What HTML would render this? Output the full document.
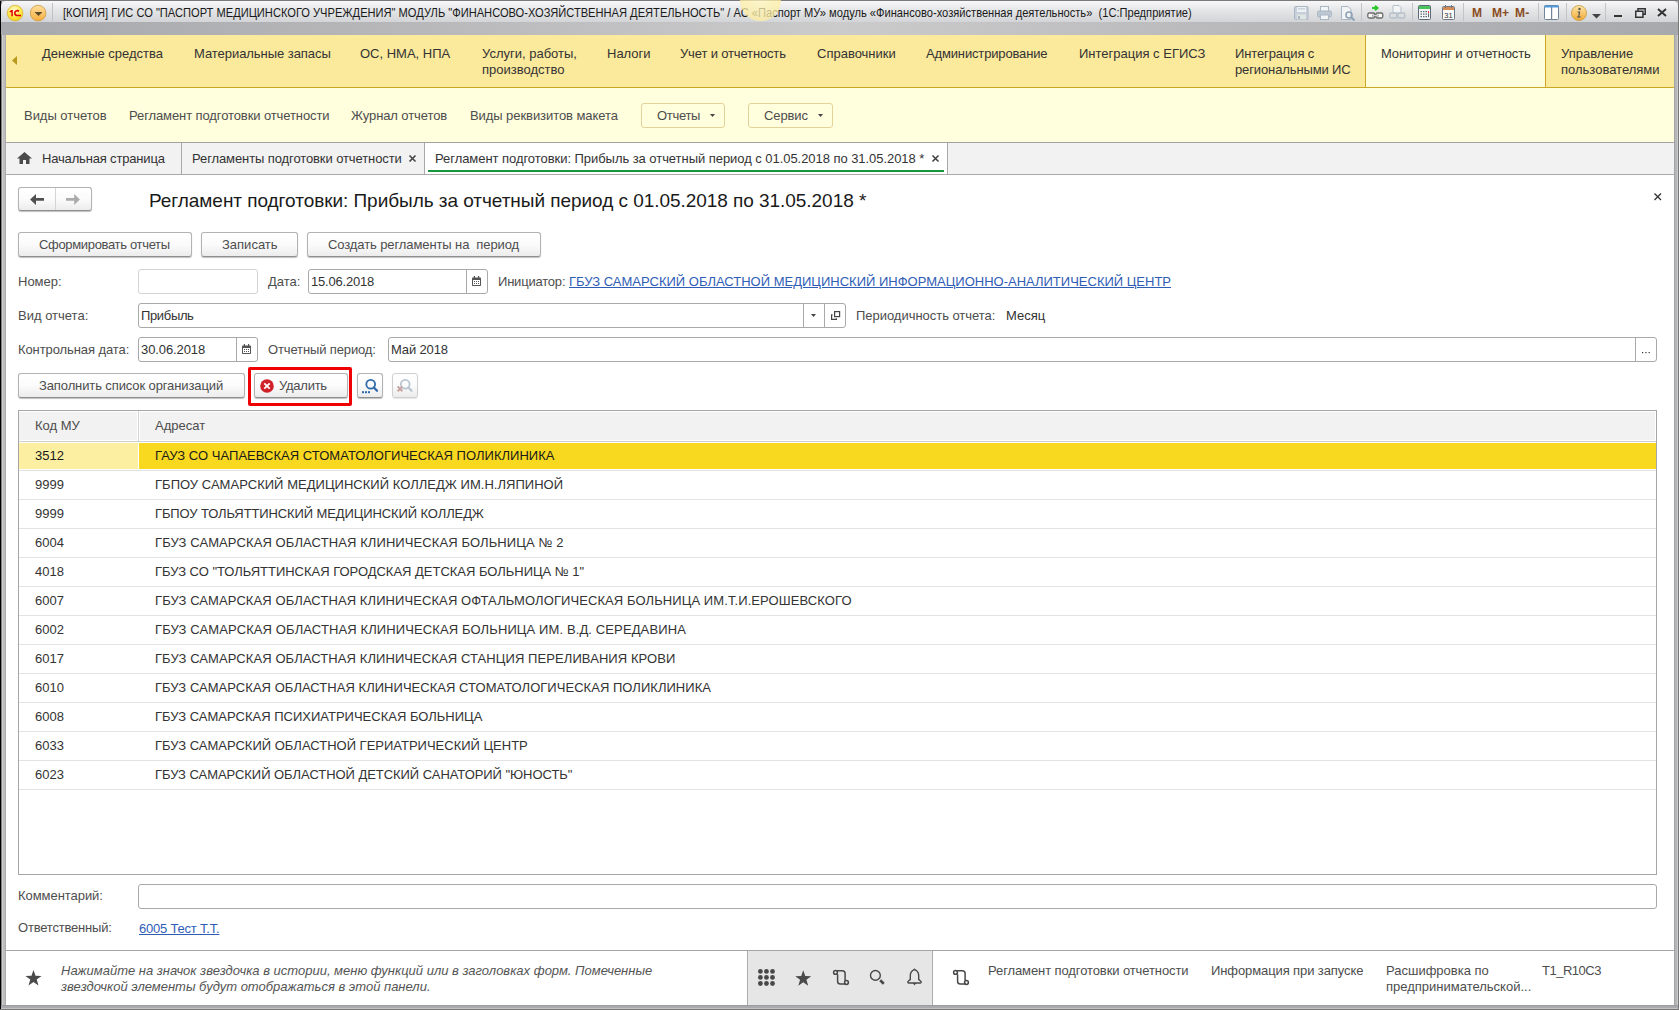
<!DOCTYPE html>
<html><head><meta charset="utf-8">
<style>
*{box-sizing:border-box;margin:0;padding:0}
html,body{width:1679px;height:1010px;overflow:hidden;background:#fff}
body{position:relative;font-family:"Liberation Sans",sans-serif;font-size:13px;color:#4d4d4d}
.a{position:absolute}
.t{position:absolute;white-space:nowrap;font-size:13px;line-height:16px}
svg{position:absolute;overflow:visible}
.btn{position:absolute;border:1px solid #b3b3b3;border-bottom-color:#8f8f8f;border-radius:3px;background:linear-gradient(#ffffff 0%,#fbfbfb 50%,#ececec 100%);box-shadow:0 1px 1px rgba(0,0,0,0.25)}
.fld{position:absolute;border:1px solid #a9a9a9;border-radius:3px;background:#fff}
.vl{position:absolute;width:1px;background:#a9a9a9}

</style></head><body>
<!-- window frame -->
<div class="a" style="left:0;top:0;width:1679px;height:1010px;background:#b5b6b8"></div>
<div class="a" style="left:0;top:0;width:1px;height:1010px;background:#000"></div>
<div class="a" style="left:1px;top:0;width:1px;height:1010px;background:#7f7f7f"></div>
<div class="a" style="left:2px;top:0;width:1px;height:1010px;background:#d0d0d0"></div>
<div class="a" style="left:3px;top:0;width:2px;height:1010px;background:#bdbdbd"></div>
<div class="a" style="left:5px;top:0;width:1px;height:1010px;background:#adadad"></div>
<div class="a" style="left:1674px;top:0;width:1px;height:1010px;background:#a3a4a6"></div>
<div class="a" style="left:1677px;top:0;width:1px;height:1010px;background:#cacaca"></div>
<div class="a" style="left:1678px;top:0;width:1px;height:1010px;background:#787878"></div>
<div class="a" style="left:0;top:0;width:1679px;height:1px;background:#7a7a7a"></div>
<!-- title bar -->
<div class="a" style="left:1px;top:1px;width:1677px;height:21px;background:linear-gradient(#f8f8f9,#e6e7e9 40%,#d3d4d7);border-radius:5px 5px 0 0"></div>
<div class="a" style="left:1px;top:22px;width:1677px;height:13px;background:linear-gradient(to right,#a8a9ad 0%,#b8b8ba 25%,#cbcbcc 50%,#b8b8ba 75%,#a8a9ad 100%)"></div>


<!-- title bar content -->
<svg style="left:7px;top:5px" width="17" height="17" viewBox="0 0 17 17">
 <defs><radialGradient id="gy" cx="0.45" cy="0.3" r="0.7"><stop offset="0" stop-color="#fffbd0"/><stop offset="0.6" stop-color="#ffe84a"/><stop offset="1" stop-color="#f5cf10"/></radialGradient></defs>
 <circle cx="8.1" cy="8.1" r="7.8" fill="url(#gy)" stroke="#d8b43a" stroke-width="0.8"/>
 <path d="M2.4 6.4 L4.4 4.9 H5.8 V11.3 H4.3 V6.8 L3 7.6 Z" fill="#e00000"/><path d="M11.9 6.3 A2.45 2.45 0 1 0 9.7 10.5 H14" fill="none" stroke="#e00000" stroke-width="1.6"/></svg>
<svg style="left:30px;top:5px" width="17" height="17" viewBox="0 0 17 17">
 <defs><linearGradient id="go" x1="0" y1="0" x2="0" y2="1"><stop offset="0" stop-color="#ffe0a0"/><stop offset="1" stop-color="#f6ad3c"/></linearGradient></defs>
 <circle cx="8.1" cy="8.1" r="7.8" fill="url(#go)" stroke="#c99a3c" stroke-width="0.8"/>
 <path d="M4.5 7 H12.5 L8.5 11 Z" fill="#5a4a2a"/>
</svg>
<div class="a" style="left:52px;top:3px;width:1px;height:20px;background:#c2c2c4"></div>
<div class="t" style="left:63px;top:5px;color:#1a1a1a;transform:scaleX(0.855);transform-origin:0 0">[КОПИЯ] ГИС СО "ПАСПОРТ МЕДИЦИНСКОГО УЧРЕЖДЕНИЯ" МОДУЛЬ "ФИНАНСОВО-ХОЗЯЙСТВЕННАЯ ДЕЯТЕЛЬНОСТЬ" / АС «Паспорт МУ» модуль «Финансово-хозяйственная деятельность»&nbsp; (1С:Предприятие)</div>
<div class="a" style="left:740px;top:-20px;width:41px;height:41px;border-radius:50%;background:radial-gradient(circle,rgba(255,246,190,0.75) 0%,rgba(255,238,160,0.75) 70%,rgba(240,205,100,0.7) 92%,rgba(240,205,100,0) 100%)"></div>
<!-- toolbar icons -->
<svg style="left:1294px;top:6px" width="15" height="14" viewBox="0 0 15 14"><rect x="0.5" y="0.5" width="13.5" height="13" rx="1" fill="#c7d0da" stroke="#a9b6c3"/><rect x="3" y="1" width="9" height="5" fill="#eef1f4"/><rect x="4" y="2.5" width="7" height="0.8" fill="#a9b6c3"/><rect x="3" y="8.5" width="9" height="5" fill="#dfe6e2"/><rect x="4" y="10" width="2" height="3" fill="#a9b6c3"/></svg>
<svg style="left:1317px;top:6px" width="15" height="14" viewBox="0 0 15 14"><rect x="3.5" y="0.5" width="8" height="5" fill="#f2f4f6" stroke="#a9b6c3"/><rect x="0.5" y="5" width="14" height="6" rx="1.5" fill="#bcc7d2" stroke="#a9b6c3"/><rect x="3.5" y="9" width="8" height="4.5" fill="#f2f4f6" stroke="#a9b6c3"/></svg>
<svg style="left:1341px;top:6px" width="15" height="15" viewBox="0 0 15 15"><path d="M0.5 0.5 H7 L10 3.5 V13.5 H0.5 Z" fill="#f2f4f6" stroke="#a9b6c3"/><circle cx="8" cy="9" r="3" fill="none" stroke="#8fa2b4" stroke-width="1.6"/><path d="M10 11 L13.5 14.5" stroke="#8fa2b4" stroke-width="2"/></svg>
<div class="a" style="left:1361px;top:3px;width:1px;height:18px;background:#c4c4c6"></div>
<svg style="left:1367px;top:5px" width="17" height="15" viewBox="0 0 17 15"><path d="M5 3 H10 M8 0.8 L10.5 3 L8 5.2" stroke="#2bc82b" stroke-width="2" fill="none"/><rect x="0.8" y="8" width="7" height="5" rx="1.5" fill="#fafafa" stroke="#6b6b6b" stroke-width="1.3"/><rect x="8.8" y="8" width="7" height="5" rx="1.5" fill="#fafafa" stroke="#6b6b6b" stroke-width="1.3"/><rect x="5.5" y="10" width="6" height="1.2" fill="#fff" stroke="#6b6b6b" stroke-width="0.5"/></svg>
<svg style="left:1389px;top:5px" width="17" height="15" viewBox="0 0 17 15"><path d="M4 0.5 H10 L12 2.5 V8 H4 Z" fill="#f2f4f6" stroke="#b7c1cb"/><rect x="0.8" y="8" width="7" height="5" rx="1.5" fill="none" stroke="#b7c1cb" stroke-width="1.4"/><rect x="8.8" y="8" width="7" height="5" rx="1.5" fill="none" stroke="#b7c1cb" stroke-width="1.4"/></svg>
<div class="a" style="left:1412px;top:3px;width:1px;height:18px;background:#c4c4c6"></div>
<svg style="left:1418px;top:5px" width="13" height="15" viewBox="0 0 13 15"><rect x="0.5" y="0.5" width="12" height="14" rx="1" fill="#f4f6f8" stroke="#5c6a78"/><rect x="1" y="1" width="11" height="3" fill="#4cc35a"/><g fill="#5c6a78"><rect x="2.5" y="6" width="1.5" height="1.2"/><rect x="5" y="6" width="1.5" height="1.2"/><rect x="7.5" y="6" width="1.5" height="1.2"/><rect x="2.5" y="8.5" width="1.5" height="1.2"/><rect x="5" y="8.5" width="1.5" height="1.2"/><rect x="7.5" y="8.5" width="1.5" height="1.2"/><rect x="2.5" y="11" width="1.5" height="1.2"/><rect x="5" y="11" width="1.5" height="1.2"/><rect x="7.5" y="11" width="1.5" height="1.2"/></g><rect x="10" y="6" width="1" height="2" fill="#e33"/><rect x="10" y="8.5" width="1" height="3.7" fill="#5c6a78"/></svg>
<svg style="left:1442px;top:5px" width="13" height="15" viewBox="0 0 13 15"><rect x="0.5" y="1.5" width="12" height="13" rx="1" fill="#fafafa" stroke="#6f7a86"/><rect x="1" y="2" width="11" height="3" fill="#d58d55"/><rect x="3" y="0" width="1" height="3" fill="#6f7a86"/><rect x="9" y="0" width="1" height="3" fill="#6f7a86"/><text x="6.5" y="12.6" font-size="7.5" font-family="Liberation Sans" text-anchor="middle" fill="#333">31</text></svg>
<div class="a" style="left:1463px;top:3px;width:1px;height:18px;background:#c4c4c6"></div>
<div class="a" style="left:1472px;top:3px;font:bold 12px/20px 'Liberation Sans';color:#8a4b1e;white-space:nowrap">M</div>
<div class="a" style="left:1492px;top:3px;font:bold 12px/20px 'Liberation Sans';color:#8a4b1e;white-space:nowrap">M+</div>
<div class="a" style="left:1515px;top:3px;font:bold 12px/20px 'Liberation Sans';letter-spacing:0.3px;color:#8a4b1e;white-space:nowrap">M-</div>
<div class="a" style="left:1538px;top:3px;width:1px;height:18px;background:#c4c4c6"></div>
<svg style="left:1544px;top:5px" width="15" height="15" viewBox="0 0 15 15"><rect x="0.5" y="0.5" width="14" height="14" rx="1" fill="#fff" stroke="#6f8399"/><rect x="0.5" y="0.5" width="14" height="2" fill="#4f9be0"/><rect x="7" y="2" width="1.2" height="12.5" fill="#6f8399"/></svg>
<div class="a" style="left:1566px;top:3px;width:1px;height:18px;background:#c4c4c6"></div>
<svg style="left:1571px;top:5px" width="16" height="16" viewBox="0 0 16 16"><defs><linearGradient id="gi" x1="0" y1="0" x2="0" y2="1"><stop offset="0" stop-color="#ffe6a8"/><stop offset="1" stop-color="#f2aa34"/></linearGradient></defs><circle cx="8" cy="8" r="7.5" fill="url(#gi)" stroke="#c8993c" stroke-width="0.8"/><circle cx="8.5" cy="4" r="1.2" fill="#555"/><path d="M6.5 6.5 H9.3 L8.3 11.5 H9.8 V12.5 H5.8 L6.2 11.5 H7.2 L7.8 7.5 H6.5 Z" fill="#555"/></svg>
<svg style="left:1592px;top:14px" width="9" height="5"><path d="M0 0 H9 L4.5 4.5 Z" fill="#444"/></svg>
<div class="a" style="left:1605px;top:3px;width:1px;height:18px;background:#c4c4c6"></div>
<div class="a" style="left:1614px;top:15px;width:8px;height:2px;background:#333"></div>
<svg style="left:1635px;top:8px" width="11" height="10" viewBox="0 0 11 10"><rect x="3" y="0.75" width="7.2" height="5.5" fill="none" stroke="#333" stroke-width="1.5"/><rect x="0.75" y="3.25" width="7.2" height="6" fill="#e6e7e9" stroke="#333" stroke-width="1.5"/></svg>
<svg style="left:1657px;top:8px" width="10" height="9"><path d="M1 1 L9 8 M9 1 L1 8" stroke="#333" stroke-width="2"/></svg>

<!-- sections panel -->
<div class="a" style="left:6px;top:35px;width:1668px;height:52px;background:#fbe99c"></div>
<div class="a" style="left:6px;top:87px;width:1668px;height:1px;background:#c8a826"></div>

<!-- function panel -->
<div class="a" style="left:6px;top:88px;width:1668px;height:54px;background:#fffedd"></div>
<div class="a" style="left:6px;top:142px;width:1668px;height:1px;background:#a2a2a2"></div>

<!-- tabs bar -->
<div class="a" style="left:6px;top:143px;width:1668px;height:31px;background:#f2f2f2"></div>
<div class="a" style="left:6px;top:174px;width:1668px;height:1px;background:#a9a9a9"></div>

<!-- form -->
<div class="a" style="left:6px;top:175px;width:1668px;height:775px;background:#fff"></div>


<!-- sections panel content -->
<svg style="left:12px;top:56px" width="6" height="10"><path d="M5 0 L5 9 L0 4.5 Z" fill="#b89a1e"/></svg>
<div class="a" style="left:1365px;top:35px;width:1px;height:52px;background:#c8a826"></div>
<div class="a" style="left:1366px;top:35px;width:179px;height:52px;background:#fffedc"></div>
<div class="a" style="left:1545px;top:35px;width:1px;height:52px;background:#c8a826"></div>
<div class="t" style="left:42px;top:46px;color:#333">Денежные средства</div>
<div class="t" style="left:194px;top:46px;color:#333;letter-spacing:-0.05px">Материальные запасы</div>
<div class="t" style="left:360px;top:46px;color:#333">ОС, НМА, НПА</div>
<div class="t" style="left:482px;top:46px;color:#333">Услуги, работы,<br>производство</div>
<div class="t" style="left:607px;top:46px;color:#333">Налоги</div>
<div class="t" style="left:680px;top:46px;color:#333;letter-spacing:-0.15px">Учет и отчетность</div>
<div class="t" style="left:817px;top:46px;color:#333">Справочники</div>
<div class="t" style="left:926px;top:46px;color:#333;letter-spacing:-0.15px">Администрирование</div>
<div class="t" style="left:1079px;top:46px;color:#333">Интеграция с ЕГИСЗ</div>
<div class="t" style="left:1235px;top:46px;color:#333;letter-spacing:-0.12px">Интеграция с<br>региональными ИС</div>
<div class="t" style="left:1381px;top:46px;color:#333;letter-spacing:-0.13px">Мониторинг и отчетность</div>
<div class="t" style="left:1561px;top:46px;color:#333">Управление<br>пользователями</div>

<!-- function panel content -->
<div class="t" style="left:24px;top:108px;letter-spacing:-0.03px">Виды отчетов</div>
<div class="t" style="left:129px;top:108px;letter-spacing:-0.1px">Регламент подготовки отчетности</div>
<div class="t" style="left:351px;top:108px;letter-spacing:-0.1px">Журнал отчетов</div>
<div class="t" style="left:470px;top:108px;letter-spacing:-0.07px">Виды реквизитов макета</div>
<div class="a" style="left:641px;top:103px;width:84px;height:25px;border:1px solid #e3d39a;border-radius:3px;background:#fffedd"></div>
<div class="t" style="left:657px;top:108px;letter-spacing:-0.3px">Отчеты</div>
<svg style="left:710px;top:114px" width="5" height="3"><path d="M0 0 H5 L2.5 3 Z" fill="#444"/></svg>
<div class="a" style="left:748px;top:103px;width:85px;height:25px;border:1px solid #e3d39a;border-radius:3px;background:#fffedd"></div>
<div class="t" style="left:764px;top:108px;letter-spacing:-0.1px">Сервис</div>
<svg style="left:818px;top:114px" width="5" height="3"><path d="M0 0 H5 L2.5 3 Z" fill="#444"/></svg>

<!-- tabs -->
<svg style="left:17px;top:152px" width="15" height="12"><path d="M7.5 0 L15 6.5 H12.5 V12 H9 V8 H6 V12 H2.5 V6.5 H0 Z" fill="#4a4a4a"/></svg>
<div class="t" style="left:42px;top:151px;color:#333;letter-spacing:-0.17px">Начальная страница</div>
<div class="a" style="left:181px;top:143px;width:1px;height:31px;background:#a8a8a8"></div>
<div class="t" style="left:192px;top:151px;color:#333;letter-spacing:-0.1px">Регламенты подготовки отчетности</div>
<svg style="left:409px;top:155px" width="7" height="7"><path d="M0.5 0.5 L6.5 6.5 M6.5 0.5 L0.5 6.5" stroke="#444" stroke-width="1.6"/></svg>
<div class="a" style="left:424px;top:143px;width:524px;height:31px;background:#fff;border-left:1px solid #a8a8a8;border-right:1px solid #a8a8a8"></div>
<div class="a" style="left:428px;top:170px;width:516px;height:2px;background:#17963c"></div>
<div class="t" style="left:435px;top:151px;color:#333;letter-spacing:-0.05px">Регламент подготовки: Прибыль за отчетный период с 01.05.2018 по 31.05.2018 *</div>
<svg style="left:932px;top:155px" width="7" height="7"><path d="M0.5 0.5 L6.5 6.5 M6.5 0.5 L0.5 6.5" stroke="#444" stroke-width="1.6"/></svg>


<!-- form header -->
<div class="btn" style="left:18px;top:187px;width:74px;height:24px"></div>
<div class="a" style="left:55px;top:188px;width:1px;height:22px;background:#d4d4d4"></div>
<svg style="left:18px;top:186px" width="74" height="26" viewBox="0 0 74 26"><path d="M12.1 13.4 L18 7.9 V12.1 H26 V14.8 H18 V18.9 Z" fill="#505050"/><path d="M48 12.1 H56.2 V7.9 L61.9 13.4 L56.2 18.9 V14.8 H48 Z" fill="#ababab"/></svg>

<div class="t" style="left:149px;top:190px;letter-spacing:-0.045px;font-size:19px;line-height:22px;color:#1a1a1a">Регламент подготовки: Прибыль за отчетный период с 01.05.2018 по 31.05.2018 *</div>
<svg style="left:1654px;top:193px" width="8" height="8"><path d="M0.5 0.5 L7 7 M7 0.5 L0.5 7" stroke="#333" stroke-width="1.3"/></svg>

<div class="btn" style="left:18px;top:232px;width:174px;height:25px"></div>
<div class="t" style="left:39px;top:237px;letter-spacing:-0.33px">Сформировать отчеты</div>
<div class="btn" style="left:201px;top:232px;width:97px;height:25px"></div>
<div class="t" style="left:222px;top:237px">Записать</div>
<div class="btn" style="left:307px;top:232px;width:234px;height:25px"></div>
<div class="t" style="left:328px;top:237px;letter-spacing:-0.1px">Создать регламенты на&nbsp; период</div>

<div class="t" style="left:18px;top:274px">Номер:</div>
<div class="fld" style="left:138px;top:269px;width:120px;height:25px;border-color:#d3d3d3"></div>
<div class="t" style="left:268px;top:274px">Дата:</div>
<div class="fld" style="left:308px;top:269px;width:180px;height:25px"></div>
<div class="vl" style="left:466px;top:270px;height:23px"></div>
<svg style="left:472px;top:276px" width="9" height="10" viewBox="0 0 9 10"><rect x="0" y="1.5" width="9" height="8.5" rx="0.8" fill="#555"/><rect x="1" y="4" width="7" height="5" fill="#fff"/><rect x="1.8" y="0" width="1.2" height="2.5" fill="#555"/><rect x="6" y="0" width="1.2" height="2.5" fill="#555"/><g fill="#555"><rect x="2" y="5" width="1" height="1"/><rect x="4" y="5" width="1" height="1"/><rect x="6" y="5" width="1" height="1"/><rect x="2" y="7" width="1" height="1"/><rect x="4" y="7" width="1" height="1"/><rect x="6" y="7" width="1" height="1"/></g></svg>
<div class="t" style="left:311px;top:274px;color:#333;letter-spacing:-0.2px">15.06.2018</div>
<div class="t" style="left:498px;top:274px;letter-spacing:-0.2px">Инициатор:</div>
<div class="t" style="left:569px;top:274px;color:#2f5db6;text-decoration:underline">ГБУЗ САМАРСКИЙ ОБЛАСТНОЙ МЕДИЦИНСКИЙ ИНФОРМАЦИОННО-АНАЛИТИЧЕСКИЙ ЦЕНТР</div>

<div class="t" style="left:18px;top:308px">Вид отчета:</div>
<div class="fld" style="left:138px;top:303px;width:708px;height:25px"></div>
<div class="vl" style="left:803px;top:304px;height:23px"></div>
<div class="vl" style="left:824px;top:304px;height:23px"></div>
<svg style="left:811px;top:314px" width="5" height="3"><path d="M0 0 H5 L2.5 3 Z" fill="#444"/></svg>
<svg style="left:831px;top:311px" width="10" height="10" viewBox="0 0 10 10"><rect x="3.6" y="0.6" width="5" height="5" fill="none" stroke="#444" stroke-width="1.2"/><path d="M1.6 3.8 H0.6 V8.3 H5.4 V7.2" fill="none" stroke="#444" stroke-width="1.2"/></svg>
<div class="t" style="left:141px;top:308px;color:#333;letter-spacing:-0.35px">Прибыль</div>
<div class="t" style="left:856px;top:308px;letter-spacing:-0.03px">Периодичность отчета:</div>
<div class="t" style="left:1006px;top:308px;color:#333">Месяц</div>

<div class="t" style="left:18px;top:342px;letter-spacing:-0.09px">Контрольная дата:</div>
<div class="fld" style="left:138px;top:337px;width:120px;height:25px"></div>
<div class="vl" style="left:236px;top:338px;height:23px"></div>
<svg style="left:242px;top:344px" width="9" height="10" viewBox="0 0 9 10"><rect x="0" y="1.5" width="9" height="8.5" rx="0.8" fill="#555"/><rect x="1" y="4" width="7" height="5" fill="#fff"/><rect x="1.8" y="0" width="1.2" height="2.5" fill="#555"/><rect x="6" y="0" width="1.2" height="2.5" fill="#555"/><g fill="#555"><rect x="2" y="5" width="1" height="1"/><rect x="4" y="5" width="1" height="1"/><rect x="6" y="5" width="1" height="1"/><rect x="2" y="7" width="1" height="1"/><rect x="4" y="7" width="1" height="1"/><rect x="6" y="7" width="1" height="1"/></g></svg>
<div class="t" style="left:141px;top:342px;color:#333;letter-spacing:-0.1px">30.06.2018</div>
<div class="t" style="left:268px;top:342px;letter-spacing:-0.13px">Отчетный период:</div>
<div class="fld" style="left:388px;top:337px;width:1269px;height:25px"></div>
<div class="vl" style="left:1635px;top:338px;height:23px"></div>
<svg style="left:1642px;top:352px" width="8" height="2"><rect x="0" y="0" width="1.2" height="1.2" fill="#333"/><rect x="3.3" y="0" width="1.2" height="1.2" fill="#333"/><rect x="6.6" y="0" width="1.2" height="1.2" fill="#333"/></svg>
<div class="t" style="left:391px;top:342px;color:#333;letter-spacing:-0.15px">Май 2018</div>

<div class="btn" style="left:18px;top:373px;width:227px;height:25px"></div>
<div class="t" style="left:39px;top:378px;letter-spacing:-0.11px">Заполнить список организаций</div>
<div class="a" style="left:248px;top:367px;width:104px;height:39px;border:3px solid #f00000;border-radius:2px"></div>
<div class="btn" style="left:254px;top:373px;width:94px;height:25px"></div>
<svg style="left:260px;top:379px" width="14" height="14" viewBox="0 0 14 14"><circle cx="7" cy="7" r="6.8" fill="#d0202a"/><path d="M4.3 4.3 L9.7 9.7 M9.7 4.3 L4.3 9.7" stroke="#fff" stroke-width="1.8"/></svg>
<div class="t" style="left:279px;top:378px;letter-spacing:-0.25px">Удалить</div>
<div class="btn" style="left:357px;top:373px;width:26px;height:25px"></div>
<svg style="left:362px;top:378px" width="16" height="16" viewBox="0 0 16 16"><circle cx="8.7" cy="6.3" r="4.4" fill="none" stroke="#2e6aab" stroke-width="1.8"/><path d="M11.9 9.5 L15 12.7" stroke="#2e6aab" stroke-width="2.3" stroke-linecap="round"/><rect x="0" y="13.2" width="2" height="2" fill="#2e6aab"/><rect x="3" y="13.2" width="2" height="2" fill="#2e6aab"/><rect x="6" y="13.2" width="2" height="2" fill="#2e6aab"/></svg>
<div class="btn" style="left:392px;top:373px;width:26px;height:25px;border-color:#d0d0d0;box-shadow:0 1px 1px rgba(0,0,0,0.1)"></div>
<svg style="left:396px;top:378px" width="18" height="16" viewBox="0 0 18 16"><circle cx="9.2" cy="6.3" r="4.4" fill="none" stroke="#b9c6d2" stroke-width="1.8"/><path d="M12.4 9.5 L15.5 12.7" stroke="#b9c6d2" stroke-width="2.3" stroke-linecap="round"/><path d="M1.6 8.4 L6.4 13.2 M6.4 8.4 L1.6 13.2" stroke="#c9a3a3" stroke-width="2"/></svg>


<!-- table -->
<div class="a" style="left:18px;top:410px;width:1639px;height:465px;border:1px solid #a6a6a6;background:#fff"></div>
<div class="a" style="left:19px;top:412px;width:1636px;height:28px;background:#f2f2f2"></div>
<div class="a" style="left:137px;top:411px;width:3px;height:30px;background:#fff;border-left:1px solid #fff;border-right:1px solid #fff"></div><div class="a" style="left:138px;top:411px;width:1px;height:30px;background:#d4d4d4"></div>
<div class="a" style="left:19px;top:441px;width:1637px;height:1px;background:#cfcfcf"></div>
<div class="t" style="left:35px;top:418px">Код МУ</div>
<div class="t" style="left:155px;top:418px">Адресат</div>
<div class="a" style="left:19px;top:443px;width:119px;height:26px;background:#fcefa2"></div>
<div class="a" style="left:139px;top:443px;width:1517px;height:26px;background:#f9d820"></div>
<div class="a" style="left:19px;top:470px;width:1637px;height:1px;background:#e3e3e3"></div>
<div class="t" style="left:35px;top:448px;color:#1a1a1a">3512</div><div class="t" style="left:155px;top:448px;letter-spacing:0.029px;color:#1a1a1a">ГАУЗ СО ЧАПАЕВСКАЯ СТОМАТОЛОГИЧЕСКАЯ ПОЛИКЛИНИКА</div>
<div class="a" style="left:19px;top:499px;width:1637px;height:1px;background:#e3e3e3"></div>
<div class="t" style="left:35px;top:477px;color:#333">9999</div><div class="t" style="left:155px;top:477px;letter-spacing:0.029px;color:#333">ГБПОУ САМАРСКИЙ МЕДИЦИНСКИЙ КОЛЛЕДЖ ИМ.Н.ЛЯПИНОЙ</div>
<div class="a" style="left:19px;top:528px;width:1637px;height:1px;background:#e3e3e3"></div>
<div class="t" style="left:35px;top:506px;color:#333">9999</div><div class="t" style="left:155px;top:506px;letter-spacing:-0.106px;color:#333">ГБПОУ ТОЛЬЯТТИНСКИЙ МЕДИЦИНСКИЙ КОЛЛЕДЖ</div>
<div class="a" style="left:19px;top:557px;width:1637px;height:1px;background:#e3e3e3"></div>
<div class="t" style="left:35px;top:535px;color:#333">6004</div><div class="t" style="left:155px;top:535px;letter-spacing:0.099px;color:#333">ГБУЗ САМАРСКАЯ ОБЛАСТНАЯ КЛИНИЧЕСКАЯ БОЛЬНИЦА № 2</div>
<div class="a" style="left:19px;top:586px;width:1637px;height:1px;background:#e3e3e3"></div>
<div class="t" style="left:35px;top:564px;color:#333">4018</div><div class="t" style="left:155px;top:564px;letter-spacing:-0.019px;color:#333">ГБУЗ СО "ТОЛЬЯТТИНСКАЯ ГОРОДСКАЯ ДЕТСКАЯ БОЛЬНИЦА № 1"</div>
<div class="a" style="left:19px;top:615px;width:1637px;height:1px;background:#e3e3e3"></div>
<div class="t" style="left:35px;top:593px;color:#333">6007</div><div class="t" style="left:155px;top:593px;letter-spacing:0.088px;color:#333">ГБУЗ САМАРСКАЯ ОБЛАСТНАЯ КЛИНИЧЕСКАЯ ОФТАЛЬМОЛОГИЧЕСКАЯ БОЛЬНИЦА ИМ.Т.И.ЕРОШЕВСКОГО</div>
<div class="a" style="left:19px;top:644px;width:1637px;height:1px;background:#e3e3e3"></div>
<div class="t" style="left:35px;top:622px;color:#333">6002</div><div class="t" style="left:155px;top:622px;letter-spacing:0.114px;color:#333">ГБУЗ САМАРСКАЯ ОБЛАСТНАЯ КЛИНИЧЕСКАЯ БОЛЬНИЦА ИМ. В.Д. СЕРЕДАВИНА</div>
<div class="a" style="left:19px;top:673px;width:1637px;height:1px;background:#e3e3e3"></div>
<div class="t" style="left:35px;top:651px;color:#333">6017</div><div class="t" style="left:155px;top:651px;letter-spacing:0.084px;color:#333">ГБУЗ САМАРСКАЯ ОБЛАСТНАЯ КЛИНИЧЕСКАЯ СТАНЦИЯ ПЕРЕЛИВАНИЯ КРОВИ</div>
<div class="a" style="left:19px;top:702px;width:1637px;height:1px;background:#e3e3e3"></div>
<div class="t" style="left:35px;top:680px;color:#333">6010</div><div class="t" style="left:155px;top:680px;letter-spacing:0.035px;color:#333">ГБУЗ САМАРСКАЯ ОБЛАСТНАЯ КЛИНИЧЕСКАЯ СТОМАТОЛОГИЧЕСКАЯ ПОЛИКЛИНИКА</div>
<div class="a" style="left:19px;top:731px;width:1637px;height:1px;background:#e3e3e3"></div>
<div class="t" style="left:35px;top:709px;color:#333">6008</div><div class="t" style="left:155px;top:709px;letter-spacing:0.004px;color:#333">ГБУЗ САМАРСКАЯ ПСИХИАТРИЧЕСКАЯ БОЛЬНИЦА</div>
<div class="a" style="left:19px;top:760px;width:1637px;height:1px;background:#e3e3e3"></div>
<div class="t" style="left:35px;top:738px;color:#333">6033</div><div class="t" style="left:155px;top:738px;letter-spacing:-0.003px;color:#333">ГБУЗ САМАРСКИЙ ОБЛАСТНОЙ ГЕРИАТРИЧЕСКИЙ ЦЕНТР</div>
<div class="a" style="left:19px;top:789px;width:1637px;height:1px;background:#e3e3e3"></div>
<div class="t" style="left:35px;top:767px;color:#333">6023</div><div class="t" style="left:155px;top:767px;letter-spacing:-0.05px;color:#333">ГБУЗ САМАРСКИЙ ОБЛАСТНОЙ ДЕТСКИЙ САНАТОРИЙ "ЮНОСТЬ"</div>

<div class="t" style="left:18px;top:888px;letter-spacing:-0.05px">Комментарий:</div>
<div class="fld" style="left:138px;top:884px;width:1519px;height:25px"></div>
<div class="t" style="left:18px;top:920px;letter-spacing:-0.2px">Ответственный:</div>
<div class="t" style="left:139px;top:921px;color:#2f5db6;text-decoration:underline;letter-spacing:-0.2px">6005 Тест Т.Т.</div>

<!-- bottom panel -->
<div class="a" style="left:6px;top:950px;width:1668px;height:1px;background:#a5a5a5"></div>
<div class="a" style="left:6px;top:951px;width:1668px;height:54px;background:#fff"></div>
<div class="a" style="left:1px;top:1005px;width:1677px;height:1px;background:#9c9da0"></div><div class="a" style="left:1px;top:1006px;width:1677px;height:2px;background:#a9aaad"></div><div class="a" style="left:1px;top:1008px;width:1677px;height:1px;background:#c1c2c4"></div><div class="a" style="left:0;top:1009px;width:1679px;height:1px;background:#787878"></div>


<!-- bottom panel content -->
<svg style="left:25px;top:970px" width="17" height="16" viewBox="0 0 24 23"><path d="M12 0 L14.9 8.3 L23.6 8.5 L16.6 13.8 L19.2 22.3 L12 17.2 L4.8 22.3 L7.4 13.8 L0.4 8.5 L9.1 8.3 Z" fill="#4a4a4a"/></svg>
<div class="t" style="left:61px;top:963px;font-style:italic;color:#555">Нажимайте на значок звездочка в истории, меню функций или в заголовках форм. Помеченные<br>звездочкой элементы будут отображаться в этой панели.</div>
<div class="a" style="left:747px;top:951px;width:186px;height:54px;background:#e6e6e6;border-left:1px solid #ababab;border-right:1px solid #ababab"></div>
<svg style="left:758px;top:969px" width="17" height="17" viewBox="0 0 17 17"><g fill="#484848"><circle cx="2.4" cy="2.4" r="2.4"/><circle cx="2.4" cy="8.45" r="2.4"/><circle cx="2.4" cy="14.5" r="2.4"/><circle cx="8.45" cy="2.4" r="2.4"/><circle cx="8.45" cy="8.45" r="2.4"/><circle cx="8.45" cy="14.5" r="2.4"/><circle cx="14.5" cy="2.4" r="2.4"/><circle cx="14.5" cy="8.45" r="2.4"/><circle cx="14.5" cy="14.5" r="2.4"/></g></svg>
<svg style="left:795px;top:969.5px" width="16.5" height="16.5" viewBox="0 0 24 23"><path d="M12 0 L14.9 8.3 L23.6 8.5 L16.6 13.8 L19.2 22.3 L12 17.2 L4.8 22.3 L7.4 13.8 L0.4 8.5 L9.1 8.3 Z" fill="#4a4a4a"/></svg>
<svg style="left:828px;top:964px" width="28" height="26" viewBox="0 0 28 26"><g fill="none" stroke="#484848" stroke-width="1.5"><circle cx="7.5" cy="8.4" r="1.9"/><circle cx="18.5" cy="18.5" r="1.9"/><path d="M8.5 6.8 H14.3 A2.8 2.8 0 0 1 17.1 9.6 V16.8"/><path d="M9.6 10.2 V17.2 A2.8 2.8 0 0 0 12.4 20 H17.6"/></g></svg>
<svg style="left:864px;top:964px" width="26" height="26" viewBox="0 0 26 26"><circle cx="11.4" cy="11.4" r="4.9" fill="none" stroke="#484848" stroke-width="1.4"/><path d="M16.2 16.3 L19.8 19.8" stroke="#484848" stroke-width="2.6"/></svg>
<svg style="left:907px;top:968px" width="16" height="19" viewBox="0 0 16 19"><g fill="none" stroke="#484848" stroke-width="1.4"><path d="M3.3 12 V7.5 C3.3 4.6 5 2.6 7.5 1.7 C10 2.6 11.7 4.6 11.7 7.5 V12"/><path d="M3.3 11.5 L1.2 13.3 C0.5 14 0.9 15 1.9 15 H13.1 C14.1 15 14.5 14 13.8 13.3 L11.7 11.5"/></g><path d="M6.2 1.8 L7.5 0.2 L8.8 1.8 Z" fill="#484848"/><path d="M5.8 15 H9.2 L7.5 17.6 Z" fill="#484848"/></svg>
<svg style="left:948px;top:964px" width="28" height="26" viewBox="0 0 28 26"><g fill="none" stroke="#484848" stroke-width="1.5"><circle cx="7.5" cy="8.4" r="1.9"/><circle cx="18.5" cy="18.5" r="1.9"/><path d="M8.5 6.8 H14.3 A2.8 2.8 0 0 1 17.1 9.6 V16.8"/><path d="M9.6 10.2 V17.2 A2.8 2.8 0 0 0 12.4 20 H17.6"/></g></svg>
<div class="t" style="left:988px;top:963px;letter-spacing:-0.1px">Регламент подготовки отчетности</div>
<div class="t" style="left:1211px;top:963px;letter-spacing:-0.1px">Информация при запуске</div>
<div class="t" style="left:1386px;top:963px">Расшифровка по<br>предпринимательской...</div>
<div class="t" style="left:1542px;top:963px;letter-spacing:-0.5px">T1_R10C3</div>

</body></html>
